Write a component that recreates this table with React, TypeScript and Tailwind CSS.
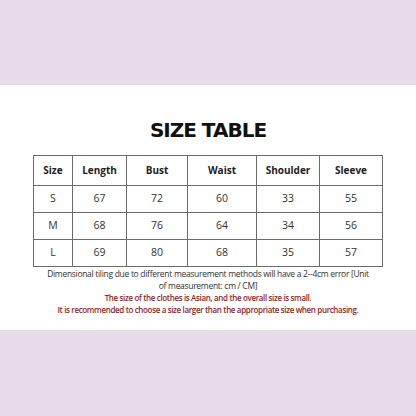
const rows = [
  ['S', '67', '72', '60', '33', '55'],
  ['M', '68', '76', '64', '34', '56'],
  ['L', '69', '80', '68', '35', '57'],
];

const heads = ['Size', 'Length', 'Bust', 'Waist', 'Shoulder', 'Sleeve'];
const widths = ['w-[39px]', 'w-[54px]', 'w-[61px]', 'w-[69px]', 'w-[63px]', 'w-[63px]'];

export default function App() {
  return (
    <div className="w-[416px] h-[416px] flex flex-col bg-[#e8dcea] font-['Open_Sans',sans-serif]">
      <div className="h-[85px]" />
      <div className="h-[245px] bg-white flex flex-col items-center">
        <h1 className="mt-[33px] h-[24px] leading-[24px] text-[20px] font-bold tracking-[-1px] text-[#111] font-['DejaVu_Sans',sans-serif]">
          SIZE TABLE
        </h1>
        <table className="mt-[13px] border-collapse border border-[#6b6b6b] text-[#333]">
          <thead>
            <tr className="h-[30px]">
              {heads.map((h, i) => (
                <th key={h} className={`${widths[i]} border border-[#6b6b6b] p-0 text-[10px] font-bold text-[#222]`}>
                  {h}
                </th>
              ))}
            </tr>
          </thead>
          <tbody>
            {rows.map((r) => (
              <tr key={r[0]} className="h-[27px]">
                {r.map((c, i) => (
                  <td key={i} className="border border-[#6b6b6b] p-0 text-center text-[10.5px]">
                    {c}
                  </td>
                ))}
              </tr>
            ))}
          </tbody>
        </table>
        <div className="mt-[1px] w-[330px] text-center text-[8.5px] leading-[12px] tracking-[-0.3px]">
          <p className="text-[#333]">
            Dimensional tiling due to different measurement methods will have a 2--4cm error [Unit of measurement: cm / CM]
          </p>
          <p className="text-[8px] tracking-[-0.35px] font-semibold text-[#9e1b1b]">
            The size of the clothes is Asian, and the overall size is small.
          </p>
          <p className="text-[8px] tracking-[-0.35px] font-semibold text-[#9e1b1b] whitespace-nowrap">
            It is recommended to choose a size larger than the appropriate size when purchasing.
          </p>
        </div>
      </div>
    </div>
  );
}
